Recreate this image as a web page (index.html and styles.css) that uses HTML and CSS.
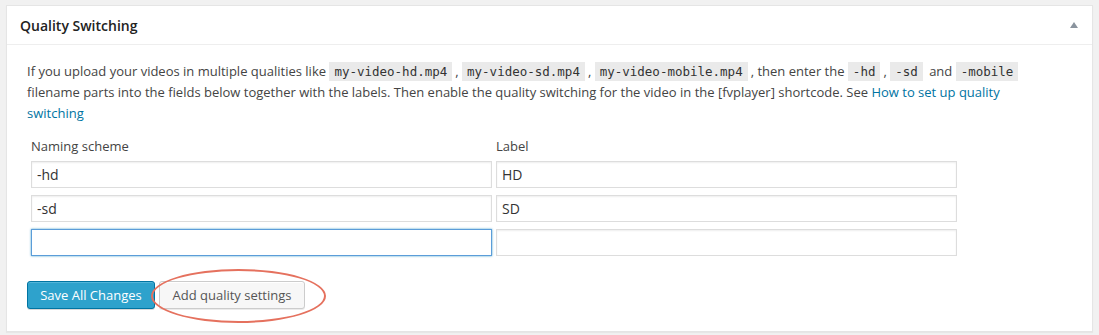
FILE: index.html
```html
<!DOCTYPE html>
<html lang="en">
<head>
    <meta charset="UTF-8">
    <title>Quality Switching</title>
    <link rel="stylesheet" href="styles.css">
</head>
<body>

<div class="postbox">
    <div class="postbox-header">
        <h2>Quality Switching</h2>
        <span class="toggle-arrow"></span>
    </div>
    <div class="inside">
        <p class="description">
            If you upload your videos in multiple qualities like <code>my-video-hd.mp4</code>, <code>my-video-sd.mp4</code>, <code>my-video-mobile.mp4</code>, then enter the <code>-hd</code>, <code>-sd</code> and <code>-mobile</code>
            filename parts into the fields below together with the labels. Then enable the quality switching for the video in the [fvplayer] shortcode. See <a href="#">How to set up quality switching</a>
        </p>

        <div class="quality-table">
            <div class="col-label">Naming scheme</div>
            <div class="col-label">Label</div>
            <input type="text" value="-hd">
            <input type="text" value="HD">
            <input type="text" value="-sd">
            <input type="text" value="SD">
            <input type="text" class="focused" value="" autofocus>
            <input type="text" value="">
        </div>

        <div class="actions">
            <button class="button-primary">Save All Changes</button>
            <span class="highlight">
                <button class="button">Add quality settings</button>
                <span class="ring"></span>
            </span>
        </div>
    </div>
</div>

</body>
</html>
```

FILE: styles.css
```css
body {
    margin: 0;
    padding: 5px 6px;
    background-color: #f1f1f1;
    font-family: 'Open Sans', sans-serif;
    font-size: 13px;
    color: #444;
}

.postbox {
    background: #fff;
    border: 1px solid #e5e5e5;
    box-shadow: 0 1px 1px rgba(0,0,0,0.04);
}

.postbox-header {
    display: flex;
    align-items: center;
    justify-content: space-between;
    height: 37px;
    border-bottom: 1px solid #eee;
    padding: 1px 14px 0 13px;
}

.postbox-header h2 {
    margin: 0;
    font-size: 14px;
    font-weight: 600;
    color: #222;
}

.toggle-arrow {
    width: 0;
    height: 0;
    border-left: 4px solid transparent;
    border-right: 4px solid transparent;
    border-bottom: 6px solid #8a949e;
    margin-top: -2px;
}

.inside {
    padding: 16px 45px 22px 20px;
}

.description {
    margin: 0;
    line-height: 21px;
    color: #444;
}

.description code {
    font-family: 'DejaVu Sans Mono', monospace;
    font-size: 12.5px;
    background: #eaeaea;
    padding: 2px 5px;
    margin: 0 3px 0 0;
    color: #333;
}

.description a {
    color: #0074a2;
    text-decoration: none;
}

.quality-table {
    display: grid;
    grid-template-columns: 461px 461px;
    column-gap: 4px;
    row-gap: 7px;
    margin: 14px 0 0 4px;
}

.col-label {
    margin-bottom: -1px;
    line-height: 17px;
    color: #444;
}

.quality-table input {
    box-sizing: border-box;
    height: 27px;
    border: 1px solid #ddd;
    box-shadow: inset 0 1px 2px rgba(0,0,0,0.07);
    padding: 0 5px;
    font-family: 'Open Sans', sans-serif;
    font-size: 14px;
    color: #333;
    outline: none;
}

.quality-table input.focused {
    border-color: #5b9dd9;
    box-shadow: 0 0 2px rgba(30,140,190,0.8);
    caret-color: #333;
}

.actions {
    display: flex;
    align-items: center;
    gap: 4px;
    margin-top: 25px;
}

.button-primary,
.button {
    box-sizing: border-box;
    height: 28px;
    padding: 0 10px;
    border-radius: 3px;
    font-family: 'Open Sans', sans-serif;
    font-size: 13px;
    cursor: pointer;
}

.button-primary {
    background: #2ea2cc;
    border: 1px solid #0074a2;
    color: #fff;
    box-shadow: inset 0 1px 0 rgba(120,200,230,0.5), 0 1px 0 rgba(0,0,0,0.15);
    width: 128px;
}

.button {
    background: #f7f7f7;
    border: 1px solid #ccc;
    color: #555;
    box-shadow: inset 0 1px 0 #fff, 0 1px 0 rgba(0,0,0,0.08);
    width: 146px;
}

.highlight {
    position: relative;
    display: inline-block;
}

.ring {
    position: absolute;
    left: -8px;
    top: -12px;
    width: 171px;
    height: 50px;
    border: 2px solid #e5715e;
    border-radius: 50%;
    pointer-events: none;
}
```
